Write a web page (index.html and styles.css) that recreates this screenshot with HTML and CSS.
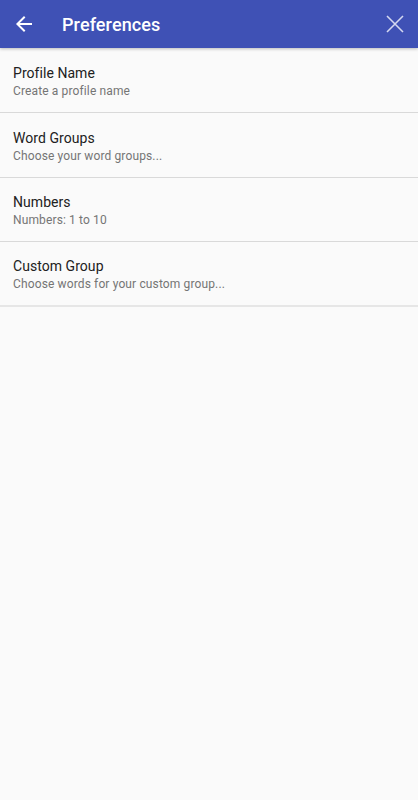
FILE: index.html
```html
<!DOCTYPE html>
<html>
<head>
<meta charset="utf-8">
<link rel="stylesheet" href="styles.css">
</head>
<body>
<header class="appbar">
  <button class="icon-btn back" aria-label="Back">
    <svg width="16" height="16" viewBox="0 0 16 16"><path d="M16 7H3.83l5.59-5.59L8 0 0 8l8 8 1.41-1.41L3.83 9H16z" fill="#fff"/></svg>
  </button>
  <h1 class="title">Preferences</h1>
  <button class="icon-btn close" aria-label="Close">
    <svg width="18" height="18" viewBox="0 0 18 18"><path d="M1 1L17 17M17 1L1 17" stroke="#d4d8f0" stroke-width="1.6" fill="none"/></svg>
  </button>
</header>
<main class="list">
  <div class="item i1"><div class="item-title">Profile Name</div><div class="item-sub">Create a profile name</div></div>
  <div class="item i2"><div class="item-title">Word Groups</div><div class="item-sub">Choose your word groups...</div></div>
  <div class="item i3"><div class="item-title">Numbers</div><div class="item-sub">Numbers: 1 to 10</div></div>
  <div class="item i4"><div class="item-title">Custom Group</div><div class="item-sub">Choose words for your custom group...</div></div>
</main>
</body>
</html>
```
FILE: styles.css
```css
html, body {
  margin: 0;
  padding: 0;
  background: #fafafa;
  font-family: Roboto, "Noto Sans", sans-serif;
  height: 100%;
}
.appbar {
  height: 48px;
  background: #3f51b5;
  display: flex;
  align-items: center;
  box-shadow: 0 1px 3px rgba(0,0,0,0.25);
  position: relative;
  z-index: 1;
}
.icon-btn {
  background: none;
  border: none;
  padding: 0;
  display: flex;
  align-items: center;
  justify-content: center;
}
.back {
  width: 16px;
  height: 16px;
  margin-left: 16px;
}
.title {
  margin: 0 0 0 30px;
  font-size: 18px;
  font-weight: 500;
  color: #fff;
  flex: 1;
  letter-spacing: 0.1px;
}
.close {
  width: 18px;
  height: 18px;
  margin-right: 14px;
}
.list {
  display: flex;
  flex-direction: column;
}
.item {
  padding: 16px 13px 0;
  box-sizing: border-box;
  border-bottom: 1px solid #d9d9d9;
}
.i1 { height: 65px; }
.i2 { height: 65px; }
.i3 { height: 64px; padding-top: 15px; }
.i4 { height: 65px; padding-top: 15px; border-bottom: 2px solid #e6e6e6; }
.item-title {
  font-size: 14px;
  color: #212121;
  line-height: 18px;
  letter-spacing: 0.05px;
}
.item-sub {
  font-size: 12px;
  color: #757575;
  line-height: 18px;
  letter-spacing: 0.13px;
}
```
